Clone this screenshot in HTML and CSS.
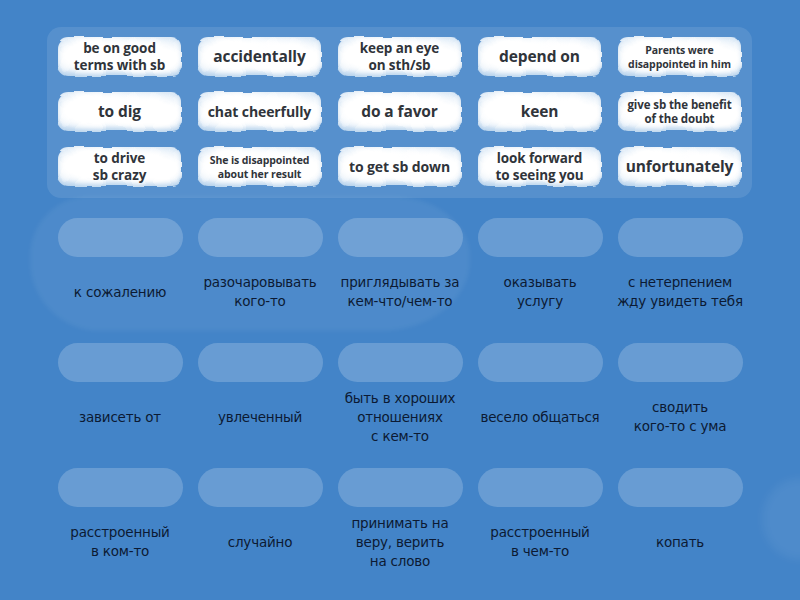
FILE: index.html
```html
<!DOCTYPE html>
<html lang="ru">
<head>
<meta charset="utf-8">
<title>Match up</title>
<link rel="stylesheet" href="styles.css">
</head>
<body>
<svg class="defs" width="0" height="0" aria-hidden="true">
  <filter id="puff" x="-10%" y="-20%" width="120%" height="140%">
    <feTurbulence type="fractalNoise" baseFrequency="0.07" numOctaves="1" seed="7" result="noise"/>
    <feDisplacementMap in="SourceGraphic" in2="noise" scale="6" xChannelSelector="R" yChannelSelector="G" result="moved"/>
    <feGaussianBlur in="moved" stdDeviation="0.4"/>
  </filter>
</svg>
<div class="board">
  <div class="haze haze-left"></div>
  <div class="haze haze-right"></div>

  <div class="bank">
    <div class="tile"><span>be on good<br>terms with sb</span></div>
    <div class="tile"><span class="lg">accidentally</span></div>
    <div class="tile"><span>keep an eye<br>on sth/sb</span></div>
    <div class="tile"><span class="lg">depend on</span></div>
    <div class="tile"><span class="xs">Parents were<br>disappointed in him</span></div>

    <div class="tile"><span class="lg">to dig</span></div>
    <div class="tile"><span class="md">chat cheerfully</span></div>
    <div class="tile"><span class="lg">do a favor</span></div>
    <div class="tile"><span class="lg">keen</span></div>
    <div class="tile"><span class="sm">give sb the benefit<br>of the doubt</span></div>

    <div class="tile"><span>to drive<br>sb crazy</span></div>
    <div class="tile"><span class="xs">She is disappointed<br>about her result</span></div>
    <div class="tile"><span class="md">to get sb down</span></div>
    <div class="tile"><span>look forward<br>to seeing you</span></div>
    <div class="tile"><span class="lg">unfortunately</span></div>
  </div>

  <div class="targets">
    <div class="slot"><div class="drop"></div><div class="label">к сожалению</div></div>
    <div class="slot"><div class="drop"></div><div class="label">разочаровывать<br>кого-то</div></div>
    <div class="slot"><div class="drop"></div><div class="label">приглядывать за<br>кем-что/чем-то</div></div>
    <div class="slot"><div class="drop"></div><div class="label">оказывать<br>услугу</div></div>
    <div class="slot"><div class="drop"></div><div class="label">с нетерпением<br>жду увидеть тебя</div></div>

    <div class="slot"><div class="drop"></div><div class="label">зависеть от</div></div>
    <div class="slot"><div class="drop"></div><div class="label">увлеченный</div></div>
    <div class="slot"><div class="drop"></div><div class="label">быть в хороших<br>отношениях<br>с кем-то</div></div>
    <div class="slot"><div class="drop"></div><div class="label">весело общаться</div></div>
    <div class="slot"><div class="drop"></div><div class="label">сводить<br>кого-то с ума</div></div>

    <div class="slot"><div class="drop"></div><div class="label">расстроенный<br>в ком-то</div></div>
    <div class="slot"><div class="drop"></div><div class="label">случайно</div></div>
    <div class="slot"><div class="drop"></div><div class="label">принимать на<br>веру, верить<br>на слово</div></div>
    <div class="slot"><div class="drop"></div><div class="label">расстроенный<br>в чем-то</div></div>
    <div class="slot"><div class="drop"></div><div class="label">копать</div></div>
  </div>
</div>
</body>
</html>
```
FILE: styles.css
```css
html, body {
  margin: 0;
  padding: 0;
}

body {
  width: 800px;
  height: 600px;
  overflow: hidden;
  background: #4384c8;
}

.defs {
  position: absolute;
}

.board {
  position: relative;
  width: 800px;
  height: 600px;
  padding-top: 27px;
  box-sizing: border-box;
  overflow: hidden;
}

.haze {
  position: absolute;
  z-index: 0;
  pointer-events: none;
}

.haze-left {
  left: 30px;
  top: 196px;
  width: 440px;
  height: 135px;
  border-radius: 60px 80px 90px 70px / 60px 60px 70px 70px;
  background: rgba(255, 255, 255, 0.055);
  filter: blur(2px);
}

.haze-right {
  left: 762px;
  top: 478px;
  width: 76px;
  height: 82px;
  border-radius: 50%;
  background: rgba(255, 255, 255, 0.06);
  filter: blur(4px);
}

/* word bank */
.bank {
  position: relative;
  z-index: 1;
  margin: 0 48px 0 47px;
  padding: 8px 0 10px;
  border-radius: 14px;
  background: rgba(255, 255, 255, 0.1);
  display: grid;
  grid-template-columns: repeat(5, 126px);
  grid-auto-rows: 43px;
  column-gap: 14px;
  row-gap: 12px;
  justify-content: center;
}

.tile {
  position: relative;
  display: flex;
  align-items: center;
  justify-content: center;
  text-align: center;
  font-family: "Open Sans", "DejaVu Sans", sans-serif;
  font-weight: 700;
  color: #30343a;
  font-size: 13.5px;
  line-height: 17px;
}

.tile::before {
  content: "";
  position: absolute;
  inset: 2px 1px;
  border-radius: 11px;
  background:
    radial-gradient(ellipse 40% 55% at 30% 45%, #ffffff 60%, rgba(255,255,255,0) 100%),
    radial-gradient(ellipse 40% 55% at 72% 55%, #ffffff 60%, rgba(255,255,255,0) 100%),
    radial-gradient(ellipse at center, #fbfdff 45%, #d6e6f5 100%);
  box-shadow: inset 0 -3px 4px rgba(150, 190, 228, 0.5);
  filter: url(#puff);
}

.tile span {
  position: relative;
  letter-spacing: -0.1px;
}

.tile .lg {
  font-size: 15.5px;
}

.tile .md {
  font-size: 14px;
}

.tile .sm {
  font-size: 11.5px;
  line-height: 14px;
}

.tile .xs {
  font-size: 10.5px;
  line-height: 14px;
}

/* answer slots */
.targets {
  position: relative;
  z-index: 1;
  margin-top: 20px;
  display: grid;
  grid-template-columns: repeat(5, 125px);
  grid-auto-rows: 109px;
  column-gap: 15px;
  row-gap: 16px;
  justify-content: center;
}

.slot {
  display: flex;
  flex-direction: column;
  align-items: center;
}

.drop {
  width: 125px;
  height: 39px;
  border-radius: 20px;
  background: rgba(255, 255, 255, 0.2);
}

.label {
  flex: 1;
  width: 150px;
  display: flex;
  align-items: center;
  justify-content: center;
  text-align: center;
  font-family: "DejaVu Sans", sans-serif;
  font-size: 13.5px;
  line-height: 19px;
  color: #0c1a33;
  letter-spacing: -0.2px;
}
```
